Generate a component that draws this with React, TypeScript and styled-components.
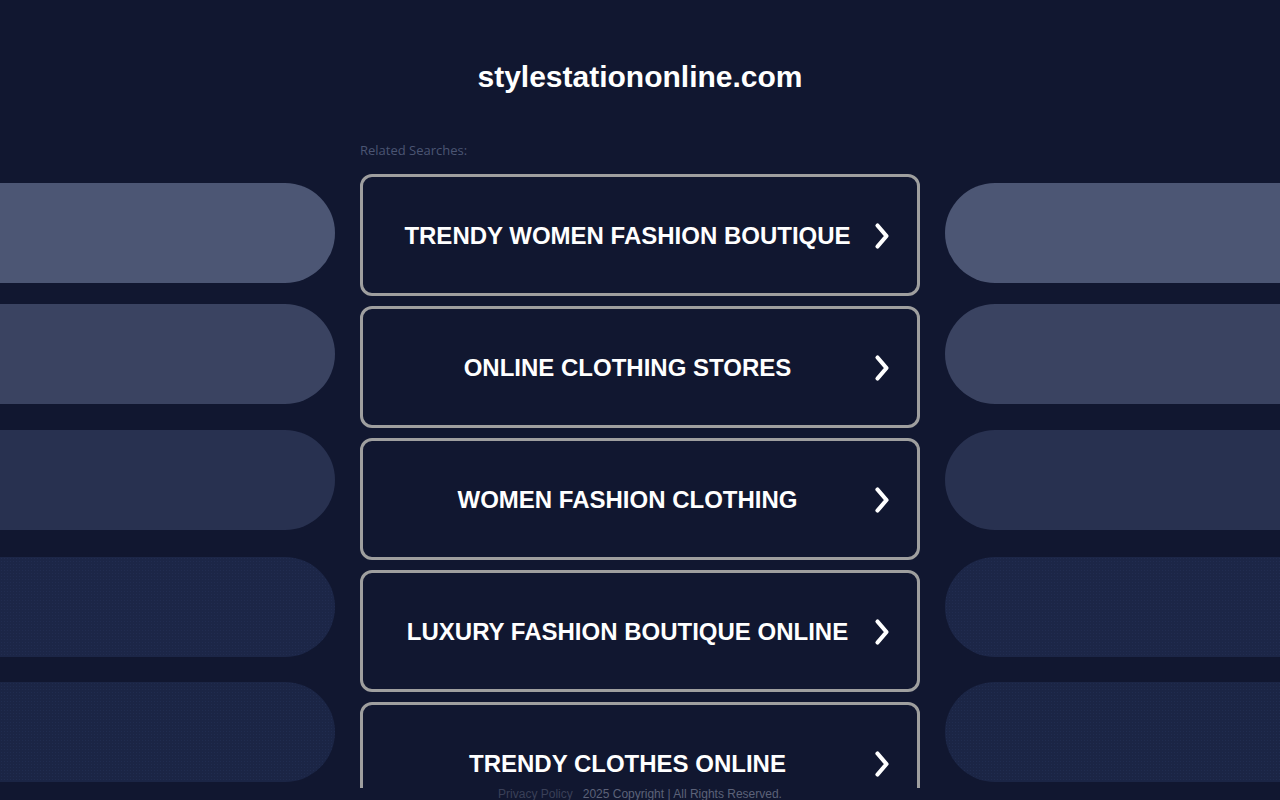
import * as React from "react";
import styled, { createGlobalStyle } from "styled-components";

const GlobalStyle = createGlobalStyle`
  html, body {
    margin: 0;
    padding: 0;
    background: #111730;
    overflow: hidden;
  }
  * {
    box-sizing: border-box;
  }
`;

const Page = styled.div`
  height: 800px;
  display: flex;
  flex-direction: column;
  font-family: "Liberation Sans", Arial, sans-serif;
  color: #ffffff;
`;

const Title = styled.h1`
  margin: 58px 0 0;
  height: 38px;
  line-height: 38px;
  font-size: 30px;
  font-weight: 700;
  text-align: center;
  color: #ffffff;
`;

const Related = styled.div`
  margin: 46px 0 0 360px;
  height: 16px;
  line-height: 16px;
  font-family: "Open Sans", "Noto Sans", sans-serif;
  font-size: 13px;
  color: #4b5573;
`;

const Row = styled.div`
  margin-top: 16px;
  height: 614px;
  display: grid;
  grid-template-columns: 335px 560px 1fr;
  column-gap: 25px;
  overflow: hidden;
`;

const SideColumn = styled.div`
  display: flex;
  flex-direction: column;
  padding-top: 9px;
`;

const Pill = styled.div<{ $side: "left" | "right"; $tone: string; $space: number; $dots?: boolean }>`
  height: 100px;
  flex: none;
  margin-top: ${({ $space }) => $space}px;
  background-color: ${({ $tone }) => $tone};
  border-radius: ${({ $side }) => ($side === "left" ? "0 50px 50px 0" : "50px 0 0 50px")};
  ${({ $dots }) =>
    $dots &&
    `
    background-image: radial-gradient(rgba(50, 64, 108, 0.25) 0.6px, transparent 0.9px);
    background-size: 3px 3px;
  `}
`;

const Cards = styled.div`
  display: flex;
  flex-direction: column;
  gap: 10px;
`;

const Card = styled.a`
  height: 122px;
  flex: none;
  display: grid;
  align-items: center;
  border: 3px solid #9f9f9f;
  border-radius: 12px;
  text-decoration: none;
  cursor: pointer;
  color: #ffffff;
`;

const Label = styled.span`
  grid-area: 1 / 1;
  padding: 2px 25px 0 0;
  text-align: center;
  font-size: 24px;
  font-weight: 700;
  text-transform: uppercase;
`;

const Chevron = styled.svg`
  grid-area: 1 / 1;
  justify-self: end;
  margin: 2px 27px 0 0;
  width: 16px;
  height: 28px;
`;

const Footer = styled.div`
  height: 12px;
  display: flex;
  justify-content: center;
  gap: 10px;
  font-size: 12px;
  line-height: 13px;
`;

const FooterLink = styled.span<{ $dim?: boolean }>`
  color: ${({ $dim }) => ($dim ? "#3a4058" : "#5c6279")};
`;

const tones = ["#4c5674", "#3a4361", "#283150", "#1c2647", "#1b2545"];
const spacing = [0, 21, 26, 27, 25];

const searches = [
  "Trendy Women Fashion Boutique",
  "Online Clothing Stores",
  "Women Fashion Clothing",
  "Luxury Fashion Boutique Online",
  "Trendy Clothes Online",
];

const Side = ({ side }: { side: "left" | "right" }) => (
  <SideColumn>
    {tones.map((tone, i) => (
      <Pill key={i} $side={side} $tone={tone} $space={spacing[i]} $dots={i >= 3} />
    ))}
  </SideColumn>
);

const App = () => (
  <>
    <GlobalStyle />
    <Page>
      <Title>stylestationonline.com</Title>
      <Related>Related Searches:</Related>
      <Row>
        <Side side="left" />
        <Cards>
          {searches.map((s) => (
            <Card key={s}>
              <Label>{s}</Label>
              <Chevron viewBox="0 0 16 28">
                <polyline
                  points="3.5,3.5 12.5,14 3.5,24.5"
                  fill="none"
                  stroke="#ffffff"
                  strokeWidth="4.2"
                  strokeLinecap="round"
                  strokeLinejoin="round"
                />
              </Chevron>
            </Card>
          ))}
        </Cards>
        <Side side="right" />
      </Row>
      <Footer>
        <FooterLink $dim>Privacy Policy</FooterLink>
        <FooterLink>2025 Copyright | All Rights Reserved.</FooterLink>
      </Footer>
    </Page>
  </>
);

export default App;
